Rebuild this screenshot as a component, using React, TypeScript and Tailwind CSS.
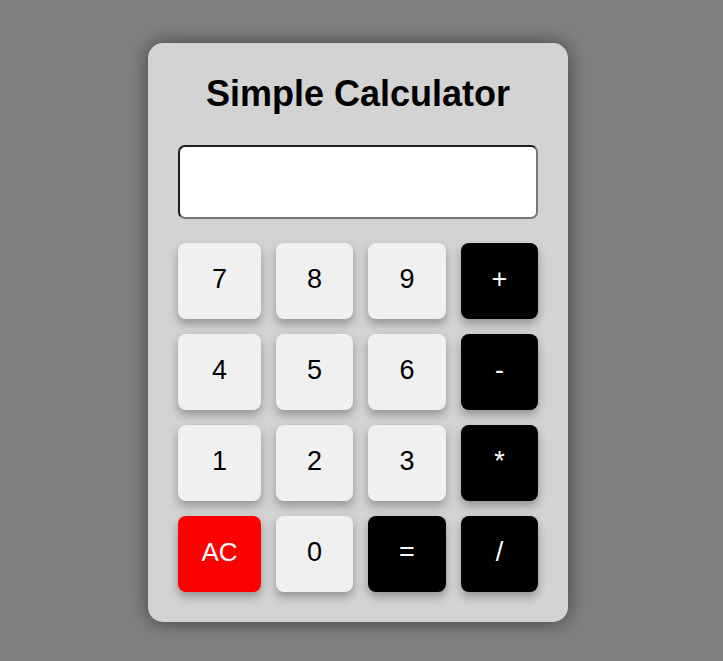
import React from "react";

type Key = { label: string; kind: "num" | "op" | "clear" };

const keys: Key[] = [
  { label: "7", kind: "num" },
  { label: "8", kind: "num" },
  { label: "9", kind: "num" },
  { label: "+", kind: "op" },
  { label: "4", kind: "num" },
  { label: "5", kind: "num" },
  { label: "6", kind: "num" },
  { label: "-", kind: "op" },
  { label: "1", kind: "num" },
  { label: "2", kind: "num" },
  { label: "3", kind: "num" },
  { label: "*", kind: "op" },
  { label: "AC", kind: "clear" },
  { label: "0", kind: "num" },
  { label: "=", kind: "op" },
  { label: "/", kind: "op" },
];

const kindClass: Record<Key["kind"], string> = {
  num: "bg-[#f0f0f0] text-black text-[27px]",
  op: "bg-black text-white text-[27px]",
  clear: "bg-[#ff0000] text-white text-[26px]",
};

export default function App() {
  return (
    <div
      className="min-h-[661px] w-full bg-[#808080] pt-[43px] pl-[148px]"
      style={{ fontFamily: '"Liberation Sans", Arial, sans-serif' }}
    >
      <div className="w-[420px] h-[579px] rounded-[15px] bg-[#d3d3d3] px-[30px] pt-[30px] shadow-[0_0_20px_rgba(0,0,0,0.5)]">
        <h1 className="text-center text-[36px] leading-[41px] font-bold text-black">
          Simple Calculator
        </h1>
        <input
          type="text"
          readOnly
          className="mt-[31px] block h-[74px] w-[360px] rounded-[7px] border-2 border-t-[#1e1e1e] border-l-[#1e1e1e] border-b-[#767676] border-r-[#767676] bg-white outline-none"
        />
        <div className="mt-[24px] grid grid-cols-[83px_77px_78px_77px] auto-rows-[76px] gap-[15px]">
          {keys.map((k) => (
            <button
              key={k.label}
              className={`flex items-center justify-center rounded-[8px] pb-[4px] shadow-[0_5px_10px_rgba(0,0,0,0.3)] ${kindClass[k.kind]}`}
            >
              {k.label}
            </button>
          ))}
        </div>
      </div>
    </div>
  );
}
